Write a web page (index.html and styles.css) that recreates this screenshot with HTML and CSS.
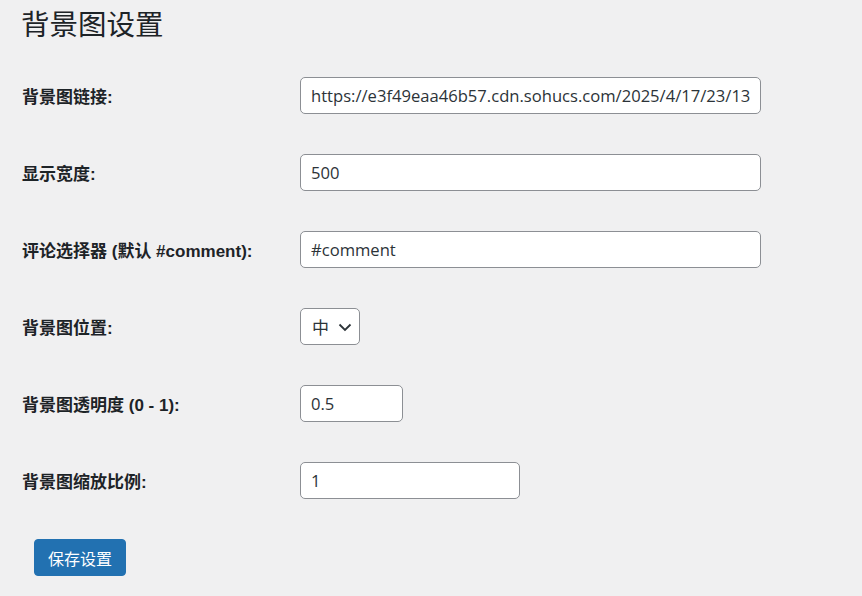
FILE: index.html
```html
<!DOCTYPE html>
<html lang="zh-CN">
<head>
  <meta charset="UTF-8" />
  <title>背景图设置</title>
  <link rel="stylesheet" href="styles.css">
</head>
<body>
  <div class="wrap">
    <h1>背景图设置</h1>

    <form class="settings-form">
      <div class="form-row">
        <label for="bgUrl">背景图链接:</label>
        <input type="text" id="bgUrl" class="field field-wide" value="https://e3f49eaa46b57.cdn.sohucs.com/2025/4/17/23/13/MTAwMTIyXzE3NDQ5MDI4MDA4MDE=.png">
      </div>

      <div class="form-row">
        <label for="bgWidth">显示宽度:</label>
        <input type="text" id="bgWidth" class="field field-wide" value="500">
      </div>

      <div class="form-row">
        <label for="commentSel">评论选择器 (默认 #comment):</label>
        <input type="text" id="commentSel" class="field field-wide" value="#comment">
      </div>

      <div class="form-row">
        <label for="bgPos">背景图位置:</label>
        <div class="select-box" id="bgPos">
          <span>中</span>
          <svg width="16" height="16" viewBox="0 0 16 16"><path d="M2.5 5.5 L8 11 L13.5 5.5" fill="none" stroke="#2c3338" stroke-width="1.8"/></svg>
        </div>
      </div>

      <div class="form-row">
        <label for="bgOpacity">背景图透明度 (0 - 1):</label>
        <input type="text" id="bgOpacity" class="field field-small" value="0.5">
      </div>

      <div class="form-row">
        <label for="bgScale">背景图缩放比例:</label>
        <input type="text" id="bgScale" class="field field-medium" value="1">
      </div>

      <div class="submit-row">
        <button type="button" class="save-btn">保存设置</button>
      </div>
    </form>
  </div>
</body>
</html>
```

FILE: styles.css
```css
body {
  margin: 0;
  background: #f0f0f1;
  color: #1d2327;
  font-family: "Liberation Sans", "Noto Sans CJK SC", sans-serif;
}

.wrap {
  padding: 6px 0 0 22px;
}

.wrap h1 {
  margin: 0 0 0 -1px;
  font-size: 28.5px;
  font-weight: 400;
  line-height: 38px;
  color: #1d2327;
}

.settings-form {
  margin-top: 13px;
}

.form-row {
  display: flex;
  align-items: center;
  height: 77px;
}

.form-row label {
  width: 278px;
  flex-shrink: 0;
  font-size: 17px;
  font-weight: 700;
  color: #1d2327;
}

.field {
  box-sizing: border-box;
  height: 37px;
  padding: 0 10px;
  border: 1px solid #8c8f94;
  border-radius: 5px;
  background: #fff;
  color: #2c3338;
  font-family: "Open Sans", "Noto Sans CJK SC", sans-serif;
  font-size: 16.6px;
  outline: none;
}

.field-wide {
  width: 461px;
}

.field-small {
  width: 103px;
}

.field-medium {
  width: 220px;
}

.select-box {
  box-sizing: border-box;
  width: 60px;
  height: 37px;
  padding: 0 6px 0 11px;
  border: 1px solid #8c8f94;
  border-radius: 5px;
  background: #fff;
  display: flex;
  align-items: center;
  justify-content: space-between;
  font-size: 17px;
  color: #2c3338;
}

.submit-row {
  padding: 20px 0 0 12px;
}

.save-btn {
  height: 37px;
  padding: 0 13px;
  border: 1px solid #2271b1;
  border-radius: 4px;
  background: #2271b1;
  color: #fff;
  font-family: "Liberation Sans", "Noto Sans CJK SC", sans-serif;
  font-size: 16px;
  cursor: pointer;
}
```
